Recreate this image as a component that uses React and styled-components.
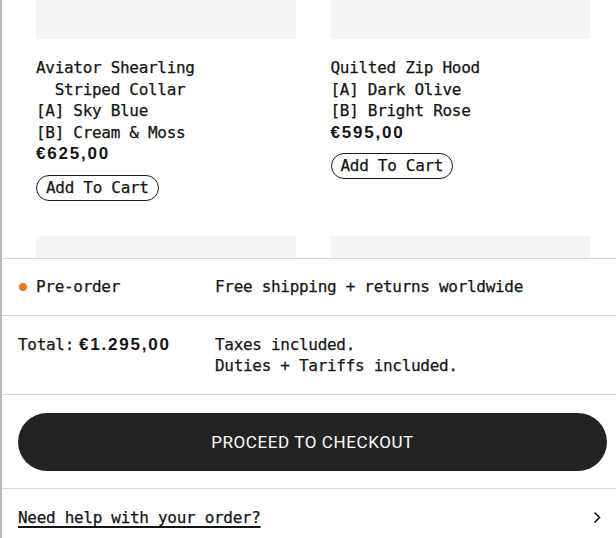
import React, { useLayoutEffect, useRef } from "react";
import styled, { createGlobalStyle } from "styled-components";

const mono = `"DejaVu Sans Mono", "Liberation Mono", monospace`;
const sans = `"Liberation Sans", Arial, sans-serif`;

const GlobalStyle = createGlobalStyle`
  *, *::before, *::after {
    box-sizing: border-box;
  }
  html, body {
    margin: 0;
    padding: 0;
    overflow: hidden;
    background: #fff;
  }
  body {
    font-family: ${mono};
    color: #151515;
  }
`;

const Drawer = styled.aside`
  width: 625px;
  height: 546px;
  display: flex;
  flex-direction: column;
  border-left: 2px solid #b9b9b9;
  background: #fff;
  font-family: ${mono};
  font-size: 16px;
  letter-spacing: -0.3px;
  line-height: 21.6px;
  -webkit-text-stroke: 0.25px #151515;
`;

const ProductScroll = styled.div`
  flex: 1;
  min-height: 0;
  overflow-y: auto;
  scrollbar-width: none;

  &::-webkit-scrollbar {
    display: none;
  }
`;

const ProductGrid = styled.div`
  display: grid;
  grid-template-columns: 1fr 1fr;
  column-gap: 35px;
  row-gap: 35px;
  padding: 0 35px 40px 34px;
`;

const Card = styled.article`
  display: flex;
  flex-direction: column;
  align-items: flex-start;
`;

const Thumb = styled.div`
  width: 100%;
  aspect-ratio: 3 / 4;
  background: #f5f5f5;
  margin-bottom: 18px;
`;

const Name = styled.div`
  white-space: pre-wrap;
`;

const Variant = styled.div``;

const Price = styled.span`
  font-family: ${sans};
  font-weight: 700;
  font-size: 17px;
  letter-spacing: 1.8px;
  -webkit-text-stroke: 0;
`;

const AddButton = styled.button`
  margin-top: 10px;
  height: 26px;
  display: inline-flex;
  align-items: center;
  padding: 0 9px;
  border: 1.5px solid #1b1b1b;
  border-radius: 13px;
  background: #fff;
  color: #151515;
  font-family: ${mono};
  font-size: 16px;
  letter-spacing: -0.3px;
  -webkit-text-stroke: 0.25px #151515;
  line-height: 1;
  cursor: pointer;
`;

const Footer = styled.footer`
  flex-shrink: 0;
`;

const FooterRow = styled.div`
  border-top: 1px solid #d8d8d8;
  padding: 17.5px 18px 17.5px 16px;
`;

const InfoRow = styled(FooterRow)`
  display: grid;
  grid-template-columns: 197px 1fr;
  align-items: start;
`;

const Status = styled.div`
  display: flex;
  align-items: center;
  gap: 9px;
`;

const Dot = styled.span`
  width: 8px;
  height: 8px;
  margin-left: 1px;
  border-radius: 50%;
  background: #e17b1e;
`;

const TotalLine = styled.div`
  display: flex;
  align-items: baseline;
  gap: 5px;
`;

const CheckoutButton = styled.button`
  width: 100%;
  height: 58px;
  border: none;
  border-radius: 29px;
  background: #232323;
  color: #fff;
  font-family: Roboto, ${sans};
  font-size: 17px;
  letter-spacing: 0.6px;
  -webkit-text-stroke: 0;
  text-transform: uppercase;
  cursor: pointer;
`;

const HelpRow = styled(FooterRow)`
  display: flex;
  align-items: center;
  justify-content: space-between;
`;

const HelpLink = styled.a`
  color: #151515;
  text-decoration: underline;
  text-underline-offset: 3px;
  text-decoration-thickness: 1.5px;
`;

const Chevron = styled.svg`
  width: 8px;
  height: 13px;
  margin-right: 6px;
`;

const products = [
  {
    name: "Aviator Shearling\n  Striped Collar",
    variants: ["[A] Sky Blue", "[B] Cream & Moss"],
    price: "€625,00",
  },
  {
    name: "Quilted Zip Hood",
    variants: ["[A] Dark Olive", "[B] Bright Rose"],
    price: "€595,00",
  },
  { name: "", variants: [], price: "" },
  { name: "", variants: [], price: "" },
];

export default function App() {
  const scrollRef = useRef(null);

  useLayoutEffect(() => {
    const el = scrollRef.current;
    const thumb = el.querySelector("[data-thumb]");
    el.scrollTop = thumb.offsetHeight - 39;
  }, []);

  return (
    <>
      <GlobalStyle />
      <Drawer>
        <ProductScroll ref={scrollRef}>
          <ProductGrid>
            {products.map((p, i) => (
              <Card key={i}>
                <Thumb data-thumb />
                {p.name && <Name>{p.name}</Name>}
                {p.variants.map((v) => (
                  <Variant key={v}>{v}</Variant>
                ))}
                {p.price && <Price>{p.price}</Price>}
                {p.price && <AddButton>Add To Cart</AddButton>}
              </Card>
            ))}
          </ProductGrid>
        </ProductScroll>
        <Footer>
          <InfoRow>
            <Status>
              <Dot />
              Pre-order
            </Status>
            <div>Free shipping + returns worldwide</div>
          </InfoRow>
          <InfoRow>
            <TotalLine>
              Total:
              <Price>€1.295,00</Price>
            </TotalLine>
            <div>
              <div>Taxes included.</div>
              <div>Duties + Tariffs included.</div>
            </div>
          </InfoRow>
          <FooterRow>
            <CheckoutButton>Proceed to checkout</CheckoutButton>
          </FooterRow>
          <HelpRow>
            <HelpLink href="#">Need help with your order?</HelpLink>
            <Chevron viewBox="0 0 8 13" fill="none">
              <path d="M1.5 1.5 L6.5 6.5 L1.5 11.5" stroke="#151515" strokeWidth="1.6" />
            </Chevron>
          </HelpRow>
        </Footer>
      </Drawer>
    </>
  );
}
